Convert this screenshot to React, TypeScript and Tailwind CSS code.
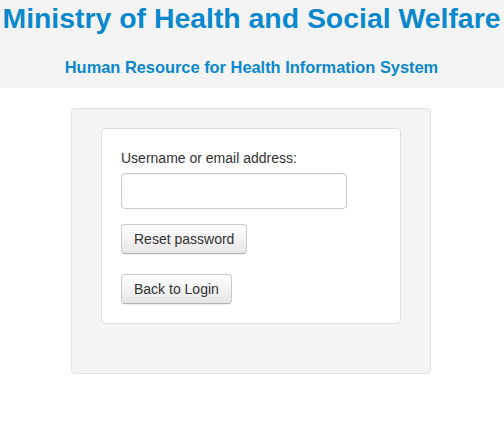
import React from "react";

const btn =
  "rounded-[4px] border border-[#ccc] border-b-[#b3b3b3] bg-gradient-to-b from-white to-[#e6e6e6] px-3 text-[14px] leading-[28px] text-[#333] shadow-[inset_0_1px_0_rgba(255,255,255,0.15),0_1px_1px_rgba(0,0,0,0.075)]";

export default function App() {
  return (
    <div className="min-h-[425px] bg-white font-['Liberation_Sans',Arial,sans-serif]">
      <header className="h-[88px] bg-[#f4f4f4] pr-px text-center text-[#0a88cf]">
        <h1 className="whitespace-nowrap pt-[1px] text-[28.4px] font-bold leading-[34px]">
          Ministry of Health and Social Welfare
        </h1>
        <h2 className="mt-[22px] whitespace-nowrap text-[16.4px] font-bold leading-[20px]">
          Human Resource for Health Information System
        </h2>
      </header>

      <div className="flex justify-center pr-[2px] pt-5">
        <div className="w-[360px] rounded-[4px] border border-[#e3e3e3] bg-[#f4f4f4] px-[29px] pt-[19px] pb-[49px]">
          <div className="rounded-[4px] border border-[#ddd] bg-white px-[19px] py-[19px]">
            <label className="block text-[14px] leading-[20px] text-[#333]">
              Username or email address:
            </label>
            <input
              type="text"
              className="mt-[5px] block h-[36px] w-[226px] rounded-[4px] border border-[#ccc] px-3 text-[14px] shadow-[inset_0_1px_1px_rgba(0,0,0,0.075)] outline-none"
            />
            <div className="mt-[15px]">
              <button className={btn}>Reset password</button>
            </div>
            <div className="mt-5">
              <button className={btn}>Back to Login</button>
            </div>
          </div>
        </div>
      </div>
    </div>
  );
}
